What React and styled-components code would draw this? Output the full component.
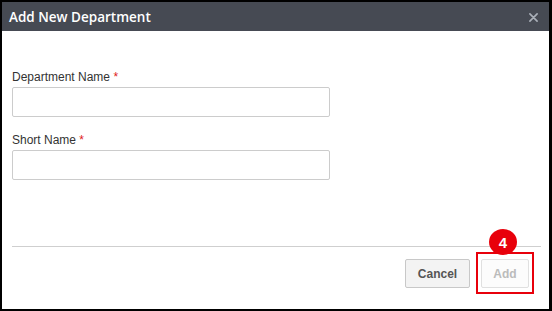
import React from "react";
import styled, { createGlobalStyle } from "styled-components";

const Global = createGlobalStyle`
  html, body { margin: 0; padding: 0; background: #000; }
  * { box-sizing: border-box; }
`;

const Frame = styled.div`
  width: 552px;
  height: 311px;
  background: #000;
  padding: 2px 3px 2px 2px;
`;

const Modal = styled.div`
  height: 100%;
  background: #fff;
  display: flex;
  flex-direction: column;
  font-family: "Liberation Sans", Arial, sans-serif;
`;

const Header = styled.div`
  height: 29px;
  flex: none;
  background: #464a53;
  display: flex;
  align-items: center;
  justify-content: space-between;
  padding: 0 10px 0 7px;
`;

const Title = styled.div`
  color: #fff;
  font-family: "Open Sans", "DejaVu Sans", sans-serif;
  font-weight: 600;
  font-size: 13.5px;
  line-height: 18px;
`;

const Close = styled.svg`
  width: 9px;
  height: 9px;
  margin-right: 1px;
  margin-top: 1px;
`;

const Body = styled.div`
  flex: 1;
  padding: 39px 10px 0 10px;
  display: flex;
  flex-direction: column;
`;

const Field = styled.div`
  display: flex;
  flex-direction: column;
  margin-bottom: ${(p) => (p.$last ? "0" : "16px")};
`;

const Label = styled.label`
  font-size: 12px;
  line-height: 15px;
  color: #333;
  margin-bottom: 2px;
`;

const Star = styled.span`
  color: #e02020;
`;

const Input = styled.input`
  width: 318px;
  height: 30px;
  border: 1px solid #ccc;
  border-radius: 2px;
  background: #fff;
  outline: none;
  font-family: inherit;
`;

const Divider = styled.div`
  height: 1px;
  background: #cfcfcf;
  margin: 0 8px 0 10px;
  flex: none;
`;

const Footer = styled.div`
  display: flex;
  justify-content: flex-end;
  gap: 11px;
  padding: 12px 20px 21px 0;
  flex: none;
`;

const Button = styled.button`
  height: 29px;
  padding: 0;
  border-radius: 2px;
  font-family: "Liberation Sans", Arial, sans-serif;
  font-weight: bold;
  font-size: 12px;
  border: 1px solid ${(p) => (p.$disabled ? "#e0e0e0" : "#c8c8c8")};
  background: ${(p) => (p.$disabled ? "#fcfcfc" : "#f3f3f3")};
  color: ${(p) => (p.$disabled ? "#bbbbbb" : "#555555")};
  width: ${(p) => (p.$disabled ? "48px" : "65px")};
`;

const Highlight = styled.div`
  position: relative;
  display: flex;
`;

const RedBox = styled.div`
  position: absolute;
  left: -5px;
  right: -5px;
  top: -7px;
  bottom: -6px;
  border: 2px solid #e8000b;
  pointer-events: none;
`;

const Badge = styled.div`
  position: absolute;
  left: 8px;
  top: -30px;
  width: 28px;
  height: 26px;
  border-radius: 50%;
  background: #e8000b;
  color: #fff;
  font-family: "Liberation Sans", Arial, sans-serif;
  font-weight: bold;
  font-size: 15px;
  display: flex;
  align-items: center;
  justify-content: center;
`;

export default function App() {
  return (
    <>
      <Global />
      <Frame>
        <Modal>
          <Header>
            <Title>Add New Department</Title>
            <Close viewBox="0 0 10 10">
              <path d="M1 1 L9 9 M9 1 L1 9" stroke="#aab0b9" strokeWidth="1.8" strokeLinecap="round" />
            </Close>
          </Header>
          <Body>
            <Field>
              <Label>
                Department Name <Star>*</Star>
              </Label>
              <Input />
            </Field>
            <Field $last>
              <Label>
                Short Name <Star>*</Star>
              </Label>
              <Input />
            </Field>
          </Body>
          <Divider />
          <Footer>
            <Button>Cancel</Button>
            <Highlight>
              <Button $disabled>Add</Button>
              <RedBox />
              <Badge>4</Badge>
            </Highlight>
          </Footer>
        </Modal>
      </Frame>
    </>
  );
}
